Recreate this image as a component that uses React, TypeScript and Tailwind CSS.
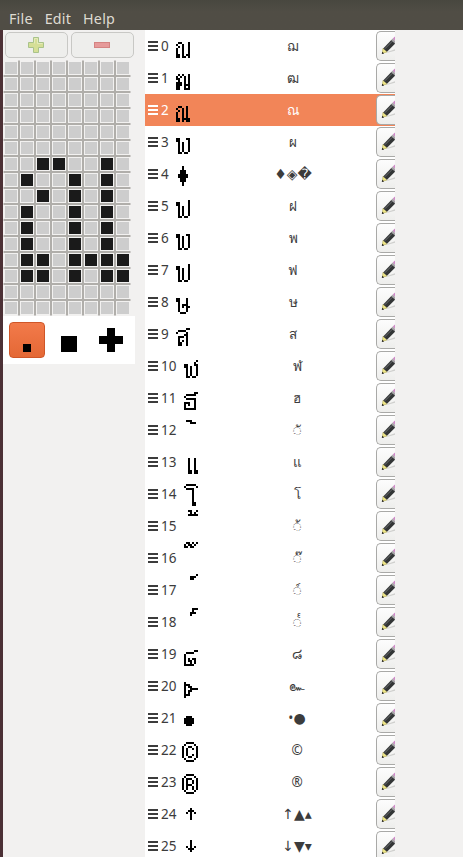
import React from 'react';

type Row = { g: string[]; top: number; t: string };

const rows: Row[] = [
  { top: 6, t: 'ฌ', g: ['..XX...X', '.X..X..X', '..X.X..X', '.X..X..X', '.X..X..X', '.X..X..X', '.XX.X.XX', '.XX.XX.X'] },
  { top: 6, t: 'ฒ', g: ['..X.X..X', '.X.X.X.X', '.XX..X.X', '..X..X.X', '.XXX.X.X', '.XXX.XXX', '.XX..X.X', '.XX..XXX'] },
  { top: 6, t: 'ณ', g: ['..XX..X.', '.X..X.X.', '..X.X.X.', '.X..X.X.', '.X..X.X.', '.X..X.X.', '.XX.XXXX', '.XX.X.XX'] },
  { top: 6, t: 'ผ', g: ['.XX...XX', '.XX....X', '..X.X..X', '..X.X..X', '..X.X..X', '..X.X..X', '..X.X..X', '..XX.XX.'] },
  { top: 4, t: '♦◈�', g: ['....X', '....X', '...XXX', '...XXX', '..XXXXX', '..XXXXX', '...XXX', '...XXX', '....X', '....X'] },
  { top: 5, t: 'ฝ', g: ['.......X', '.XX....X', '.XX....X', '..X.X..X', '..X.X..X', '..X.X..X', '..X.X..X', '..X.X..X', '..XX.XX.'] },
  { top: 6, t: 'พ', g: ['.XX...XX', '.XX.X..X', '..X.X..X', '..X.X..X', '..X.X..X', '..X.X..X', '..X.X..X', '..XX.XX.'] },
  { top: 5, t: 'ฟ', g: ['.......X', '.XX....X', '.XX.X..X', '..X.X..X', '..X.X..X', '..X.X..X', '..X.X..X', '..X.X..X', '..XX.XX.'] },
  { top: 6, t: 'ษ', g: ['.XX...X.', '.XX...X.', '..X...X.', '..X.XXX.', '..X.X.XX', '..X...X.', '..X...X.', '...XXX..'] },
  { top: 5, t: 'ส', g: ['......XX', '..XXXX..', '.X....X.', '.....XX.', '..XXX.X.', '..X...X.', '..X.X.X.', '..XX..X.', '..XX..X.'] },
  { top: 5, t: 'ฬ', g: ['.......X', '......X.', '.XX...XX', '.XX.X..X', '..X.X..X', '..X.X..X', '..X.X..X', '..X.X..X', '..XX.XX.'] },
  { top: 5, t: 'ฮ', g: ['......XX', '..XXXXX.', '.X......', '..XXXXX.', '......X.', '.XXX..X.', '.X.X..X.', '.X....X.', '.XXXXXX.'] },
  { top: 3, t: '◌ั', g: ['..XXX...', '....XXX.'] },
  { top: 6, t: 'แ', g: ['...X..X.', '...X..X.', '...X..X.', '...X..X.', '...X..X.', '...X..X.', '...XX.XX', '...XX.XX'] },
  { top: 3, t: 'โ', g: ['..XXXXX.', '.X.....X', '..XXXX..', '.....X..', '.....X..', '.....X..', '.....X..', '.....X..', '.....X..', '.....XX.', '.....XX.'] },
  { top: 0, t: '◌้', g: ['...XX..X', '....X.X.', '...XXXXX'] },
  { top: 0, t: '◌๊', g: ['..XX.X.X', '.X.XX.X.', '.XX.XX..'] },
  { top: 0, t: '◌์', g: ['.......X', '....XXX.', '....XX..'] },
  { top: 1, t: '◌๎', g: ['.....XXX', '.....X..', '....XXX.', '....X...'] },
  { top: 6, t: '๘', g: ['......XX', '..XXXX..', '.X......', '.X......', '.X.X.XX.', '.X.XX.X.', '.X..X.X.', '.XXXXX..'] },
  { top: 6, t: '๛', g: ['.X......', '.XXX....', '.X.XX...', '.X..XXXX', '.X.XX...', '.X.X....', '.XXX....', '.X......'] },
  { top: 7, t: '•●', g: ['..XXX...', '.XXXXX..', '.XXXXX..', '.XXXXX..', '..XXX...'] },
  { top: 4, t: '©', g: ['..XXXX..', '.X....X.', 'X..XX..X', 'X.X..X.X', 'X.X....X', 'X.X....X', 'X.X..X.X', 'X..XX..X', '.X....X.', '..XXXX..'] },
  { top: 4, t: '®', g: ['..XXXX..', '.X....X.', 'X.XXX..X', 'X.X..X.X', 'X.X..X.X', 'X.XXX..X', 'X.X..X.X', 'X.X..X.X', '.X....X.', '..XXXX..'] },
  { top: 5, t: '↑▲▴', g: ['....X...', '...XXX..', '..X.X.X.', '....X...', '....X...', '....X...'] },
  { top: 5, t: '↓▼▾', g: ['....X...', '....X...', '....X...', '..X.X.X.', '...XXX..', '....X...'] },
];

function Glyph({ g, top }: { g: string[]; top: number }) {
  return (
    <svg width="16" height="32" viewBox="0 0 8 16" shapeRendering="crispEdges" className="shrink-0">
      {g.flatMap((line, y) =>
        [...line].map((c, x) => (c === 'X' ? <rect key={`${x}-${y}`} x={x} y={y + top} width="1" height="1" /> : null)),
      )}
    </svg>
  );
}

function Pencil() {
  return (
    <svg width="18" height="20" viewBox="0 0 18 20" className="mb-[2px] block shrink-0">
      <path d="M6 17 L14 14.2 L18 13.8 L18 14.8 L6.5 17.8Z" fill="#cfcfcd" />
      <path d="M1.4 18.2 L2 13.2 L6 17Z" fill="#f0e88a" stroke="#a69c3c" strokeWidth=".5" />
      <path d="M.8 19 L1.2 16.8 L3.2 18.4Z" fill="#222" />
      <path d="M2.2 13.4 L10.6 4.8 L14.4 8.4 L6 16.8Z" fill="#333536" />
      <path d="M3.8 13.8 L11.8 5.8" stroke="#6b6e6f" strokeWidth="1" />
      <path d="M10.2 5.2 L11.8 3.6 L15.6 7.2 L14 8.8Z" fill="#a5a3a6" />
      <path d="M11.8 3.6 L13.6 1.8 H17 V6 L15.6 7.2Z" fill="#cf8cc8" />
    </svg>
  );
}

const bitmap = rows[2];

const symbolFont = (c: string) => ('♦◈�●↑▲▴↓▼▾'.includes(c) ? "font-['DejaVu_Sans',sans-serif] text-[14px]" : '');

function Label({ t }: { t: string }) {
  if (t.startsWith('◌')) return <>{t}</>;
  return (
    <>
      {[...t].map((c, i) => (
        <span key={i} className={symbolFont(c)}>
          {c}
        </span>
      ))}
    </>
  );
}

export default function App() {
  return (
    <div className="flex h-[857px] w-[463px] flex-col overflow-hidden bg-[#f2f1f0] font-['Noto_Sans','Open_Sans',sans-serif] text-[#3c3c3c]">
      <div className="flex h-[30px] shrink-0 items-end gap-[12px] bg-linear-to-b from-[#48473f] from-0% to-[#504d45] to-40% pb-[1px] pl-[9px] text-[14.3px] leading-5 tracking-[0.2px] text-[#dfdbd2]">
        <span>File</span>
        <span>Edit</span>
        <span>Help</span>
      </div>
      <div className="flex min-h-0 flex-1">
        <div className="w-[3px] bg-linear-to-b from-[#4d3136] to-[#4b3035]" />
        <div className="w-[142px] pt-[2px]">
          <div className="flex gap-[3px] pl-[2px]">
            <div className="flex h-[26px] w-[63px] items-center justify-center rounded-[5px] border border-[#c8c8c5] bg-[#eeeeec] pr-[2px]">
              <svg width="16" height="16" viewBox="0 0 16 16">
                <path d="M5.5 .5h5v5h5v5h-5v5h-5v-5h-5v-5h5z" fill="#d5df96" stroke="#a9c38a" />
                <path d="M6.5 6.5v-5h3v5h5" fill="none" stroke="#e5ebbb" />
              </svg>
            </div>
            <div className="flex h-[26px] w-[63px] items-center justify-center rounded-[5px] border border-[#c8c8c5] bg-[#eeeeec] pr-[2px]">
              <div className="h-[6px] w-4 border border-[#d48382] bg-[#e69a9a]" />
            </div>
          </div>
          <div className="mt-[2px] grid w-[128px] grid-cols-8">
            {Array.from({ length: 128 }, (_, i) => {
              const x = i % 8;
              const y = Math.floor(i / 8);
              const on = bitmap.g[y - bitmap.top]?.[x] === 'X';
              return (
                <div
                  key={i}
                  className={`flex h-4 w-4 items-center justify-center border border-[#b0aeaa] ${x === 0 ? 'border-l-transparent' : ''} ${x === 7 ? 'border-r-transparent' : ''} ${y === 0 ? 'border-t-transparent' : ''} ${y === 15 ? 'border-b-transparent' : ''}`}
                >
                  <div className={`h-3 w-3 shrink-0 ${on ? 'bg-[#1a1a1a]' : 'bg-[#cdcdcd]'}`} />
                </div>
              );
            })}
          </div>
          <div className="flex h-12 w-[132px] items-center bg-white pl-[6px]">
            <div className="flex h-9 w-9 items-end justify-center rounded-[4px] border border-[#cf5628] bg-linear-to-b from-[#f27a4a] to-[#e46835] pb-[5px]">
              <div className="h-2 w-2 bg-black" />
            </div>
            <div className="mt-2 ml-4 h-4 w-4 bg-black" />
            <svg width="24" height="24" viewBox="0 0 24 24" className="ml-[22px]" shapeRendering="crispEdges">
              <path d="M8 0h8v8h8v8h-8v8H8v-8H0V8h8z" />
            </svg>
          </div>
        </div>
        <div className="w-[250px] bg-white">
          {rows.map((r, i) => (
            <div key={i} className={`flex h-8 ${i === 2 ? 'bg-[#f28558] text-white' : ''}`}>
              <div className="mt-[11px] ml-[3px] flex w-[10px] flex-col gap-[2px]">
                <div className="h-[2px] bg-current" />
                <div className="h-[2px] bg-current" />
                <div className="h-[2px] bg-current" />
              </div>
              <div className={`ml-[3px] ${i < 10 ? 'w-[13px]' : 'w-[21px]'} text-[13.5px] leading-8`}>{i}</div>
              <div className="h-8 text-black">
                <Glyph g={r.g} top={r.top} />
              </div>
              <div className="flex h-8 flex-1 justify-center overflow-hidden pl-[20px] text-[13.5px] leading-8 whitespace-nowrap">
                <span>
                  <Label t={r.t} />
                </span>
              </div>
              <div className="mt-px flex h-[30px] w-[19px] items-center overflow-hidden rounded-l-[5px] border border-r-0 border-[#a9a9a7] bg-linear-to-b from-[#fdfdfd] to-[#eeeeec] pl-[4px]">
                <Pencil />
              </div>
            </div>
          ))}
        </div>
      </div>
    </div>
  );
}
